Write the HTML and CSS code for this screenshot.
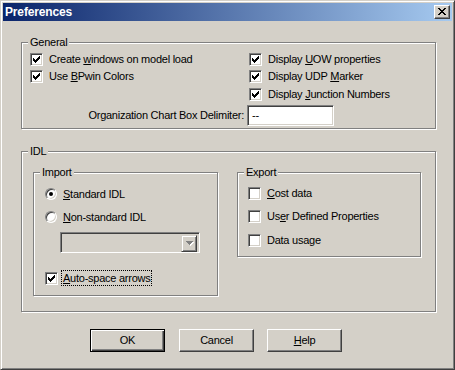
FILE: index.html
```html
<!DOCTYPE html>
<html>
<head>
<meta charset="utf-8">
<link rel="stylesheet" href="styles.css">
</head>
<body>
<div class="window">
  <div class="titlebar">
    <span class="title">Preferences</span>
    <span class="closebtn"><svg width="8" height="7" viewBox="0 0 8 7"><path d="M0 0h2v1h-2z M6 0h2v1h-2z M1 1h2v1h-2z M5 1h2v1h-2z M2 2h4v1h-4z M3 3h2v1h-2z M2 4h4v1h-4z M1 5h2v1h-2z M5 5h2v1h-2z M0 6h2v1h-2z M6 6h2v1h-2z" fill="#000"/></svg></span>
  </div>
  <div class="group general">
    <div class="caption">General</div>
    <div class="gen-grid">
      <div class="cb"><span class="box"><svg class="check" width="7" height="7" viewBox="0 0 7 7"><path d="M0 2h1v3h-1z M1 3h1v3h-1z M2 4h1v3h-1z M3 3h1v3h-1z M4 2h1v3h-1z M5 1h1v3h-1z M6 0h1v3h-1z" fill="#000"/></svg></span><span class="lbl">Create <u>w</u>indows on model load</span></div>
      <div class="cb"><span class="box"><svg class="check" width="7" height="7" viewBox="0 0 7 7"><path d="M0 2h1v3h-1z M1 3h1v3h-1z M2 4h1v3h-1z M3 3h1v3h-1z M4 2h1v3h-1z M5 1h1v3h-1z M6 0h1v3h-1z" fill="#000"/></svg></span><span class="lbl">Display <u>U</u>OW properties</span></div>
      <div class="cb"><span class="box"><svg class="check" width="7" height="7" viewBox="0 0 7 7"><path d="M0 2h1v3h-1z M1 3h1v3h-1z M2 4h1v3h-1z M3 3h1v3h-1z M4 2h1v3h-1z M5 1h1v3h-1z M6 0h1v3h-1z" fill="#000"/></svg></span><span class="lbl">Use <u>B</u>Pwin Colors</span></div>
      <div class="cb"><span class="box"><svg class="check" width="7" height="7" viewBox="0 0 7 7"><path d="M0 2h1v3h-1z M1 3h1v3h-1z M2 4h1v3h-1z M3 3h1v3h-1z M4 2h1v3h-1z M5 1h1v3h-1z M6 0h1v3h-1z" fill="#000"/></svg></span><span class="lbl">Display UDP <u>M</u>arker</span></div>
      <div></div>
      <div class="cb"><span class="box"><svg class="check" width="7" height="7" viewBox="0 0 7 7"><path d="M0 2h1v3h-1z M1 3h1v3h-1z M2 4h1v3h-1z M3 3h1v3h-1z M4 2h1v3h-1z M5 1h1v3h-1z M6 0h1v3h-1z" fill="#000"/></svg></span><span class="lbl">Display <u>J</u>unction Numbers</span></div>
      <div class="delim-label">Organization Chart Box Delimiter:</div>
      <div class="textbox">--</div>
    </div>
  </div>
  <div class="group idl">
    <div class="caption">IDL</div>
    <div class="idl-row">
      <div class="group import">
        <div class="caption">Import</div>
        <div class="rb first"><span class="radio on"></span><span class="lbl"><u>S</u>tandard IDL</span></div>
        <div class="rb second"><span class="radio"></span><span class="lbl"><u>N</u>on-standard IDL</span></div>
        <div class="combo"><span class="combo-field"></span><span class="combo-btn"><svg width="8" height="5" viewBox="0 0 8 5"><path d="M1 1h7v1h-1v1h-1v1h-1v1h-1v-1h-1v-1h-1v-1h-1z" fill="#fff"/><path d="M0 0h7v1h-1v1h-1v1h-1v1h-1v-1h-1v-1h-1v-1h-1z" fill="#808080"/></svg></span></div>
        <div class="cb auto"><span class="box"><svg class="check" width="7" height="7" viewBox="0 0 7 7"><path d="M0 2h1v3h-1z M1 3h1v3h-1z M2 4h1v3h-1z M3 3h1v3h-1z M4 2h1v3h-1z M5 1h1v3h-1z M6 0h1v3h-1z" fill="#000"/></svg></span><span class="lbl focus"><u>A</u>uto-space arrows</span></div>
      </div>
      <div class="group export">
        <div class="caption">Export</div>
        <div class="cb ex1"><span class="box"></span><span class="lbl"><u>C</u>ost data</span></div>
        <div class="cb ex2"><span class="box"></span><span class="lbl">Us<u>e</u>r Defined Properties</span></div>
        <div class="cb ex3"><span class="box"></span><span class="lbl">Data usage</span></div>
      </div>
    </div>
  </div>
  <div class="buttons">
    <div class="btn default"><span class="btn-in">OK</span></div>
    <div class="btn cancel"><span class="btn-in">Cancel</span></div>
    <div class="btn help"><span class="btn-in"><u>H</u>elp</span></div>
  </div>
</div>
</body>
</html>
```
FILE: styles.css
```css
html, body {
  margin: 0;
  padding: 0;
  background: #d4d0c8;
}
.window {
  width: 455px;
  height: 370px;
  box-sizing: border-box;
  border: 1px solid;
  border-color: #d4d0c8 #404040 #404040 #d4d0c8;
  box-shadow: inset 1px 1px 0 #fff, inset -1px -1px 0 #808080;
  padding: 2px;
  background: #d4d0c8;
  display: flex;
  flex-direction: column;
  font-family: "Liberation Sans", Arial, sans-serif;
  font-size: 11px;
  letter-spacing: -0.25px;
  line-height: 13px;
  color: #000;
}
.titlebar {
  height: 18px;
  flex: none;
  display: flex;
  align-items: center;
  padding: 0 2px;
  background: linear-gradient(to right, #0a246a, #a6caf0);
}
.title {
  color: #fff;
  font-weight: bold;
  font-size: 12px;
  letter-spacing: -0.15px;
  line-height: 14px;
}
.closebtn {
  margin-left: auto;
  width: 16px;
  height: 14px;
  box-sizing: border-box;
  background: #d4d0c8;
  border: 1px solid;
  border-color: #fff #404040 #404040 #fff;
  box-shadow: inset -1px -1px 0 #808080;
  padding: 2px 0 0 3px;
}
.closebtn svg { display: block; }
.group {
  box-sizing: border-box;
  border: 1px solid #808080;
  box-shadow: 1px 1px 0 #fff, inset 1px 1px 0 #fff;
  display: flex;
  flex-direction: column;
  align-items: flex-start;
  flex: none;
}
.caption {
  margin: -7px 0 0 6px;
  padding: 0 2px;
  background: #d4d0c8;
  line-height: 13px;
}
.general {
  margin: 21px 0 0 18px;
  width: 415px;
  height: 87px;
}
.gen-grid {
  display: grid;
  grid-template-columns: 219px 160px;
  grid-template-rows: 17px 18px 17px 21px;
  margin: 4px 0 0 8px;
}
.cb, .rb {
  display: flex;
  align-items: flex-start;
  white-space: nowrap;
}
.box {
  width: 13px;
  height: 13px;
  box-sizing: border-box;
  border: 1px solid;
  border-color: #808080 #fff #fff #808080;
  box-shadow: inset 1px 1px 0 #404040, inset -1px -1px 0 #d4d0c8;
  background: #fff;
  padding: 2px;
  flex: none;
}
.check { display: block; }
.lbl { margin-left: 6px; }
.delim-label {
  justify-self: end;
  align-self: center;
  margin-right: 5px;
  white-space: nowrap;
}
.textbox {
  margin-left: -2px;
  width: 87px;
  height: 21px;
  box-sizing: border-box;
  border: 1px solid;
  border-color: #808080 #fff #fff #808080;
  box-shadow: inset 1px 1px 0 #404040, inset -1px -1px 0 #d4d0c8;
  background: #fff;
  padding: 3px 0 0 4px;
}
.idl {
  margin: 22px 0 0 18px;
  width: 415px;
  height: 161px;
}
.idl-row {
  display: flex;
  align-items: flex-start;
  margin: 14px 0 0 11px;
}
.import {
  width: 185px;
  height: 124px;
}
.export {
  width: 184px;
  height: 85px;
  margin-left: 19px;
}
.rb { margin-left: 11px; }
.rb.first { margin-top: 9px; }
.rb.second { margin-top: 10px; }
.radio {
  width: 12px;
  height: 12px;
  box-sizing: border-box;
  border-radius: 50%;
  border: 1px solid;
  border-color: #808080 #fff #fff #808080;
  box-shadow: inset 1px 1px 0 #404040, inset -1px -1px 0 #d4d0c8;
  background: #fff;
  flex: none;
  display: flex;
  align-items: center;
  justify-content: center;
}
.radio.on::after {
  content: "";
  width: 4px;
  height: 4px;
  border-radius: 50%;
  background: #000;
}
.combo {
  margin: 8px 0 0 26px;
  width: 140px;
  height: 21px;
  box-sizing: border-box;
  border: 1px solid;
  border-color: #808080 #fff #fff #808080;
  box-shadow: inset 1px 1px 0 #404040, inset -1px -1px 0 #d4d0c8;
  background: #d4d0c8;
  padding: 2px;
  display: flex;
  justify-content: flex-end;
}
.combo-btn {
  width: 16px;
  height: 17px;
  box-sizing: border-box;
  border: 1px solid;
  border-color: #d4d0c8 #404040 #404040 #d4d0c8;
  box-shadow: inset 1px 1px 0 #fff, inset -1px -1px 0 #808080;
  display: flex;
  align-items: center;
  justify-content: center;
}
.combo-btn svg { display: block; margin-left: 1px; }
.cb.auto { margin: 19px 0 0 11px; }
.focus {
  margin-left: 3px;
  padding: 0 1px 0 1px;
  border: 1px dotted #000;
  margin-top: -2px;
  line-height: 14px;
}
.export .cb { margin-left: 10px; }
.cb.ex1 { margin-top: 8px; }
.cb.ex2 { margin-top: 10px; }
.cb.ex3 { margin-top: 11px; }
.buttons {
  display: flex;
  margin: 17px 0 0 87px;
}
.btn {
  width: 75px;
  height: 23px;
  box-sizing: border-box;
  border: 1px solid;
  border-color: #fff #404040 #404040 #fff;
  box-shadow: inset -1px -1px 0 #808080;
  display: flex;
  align-items: center;
  justify-content: center;
}
.btn.default {
  border: 1px solid #000;
  box-shadow: inset 1px 1px 0 #fff, inset -1px -1px 0 #404040, inset -2px -2px 0 #808080;
}
.btn.cancel { margin-left: 14px; }
.btn.help { margin-left: 13px; }
.btn-in { line-height: 13px; }
```
